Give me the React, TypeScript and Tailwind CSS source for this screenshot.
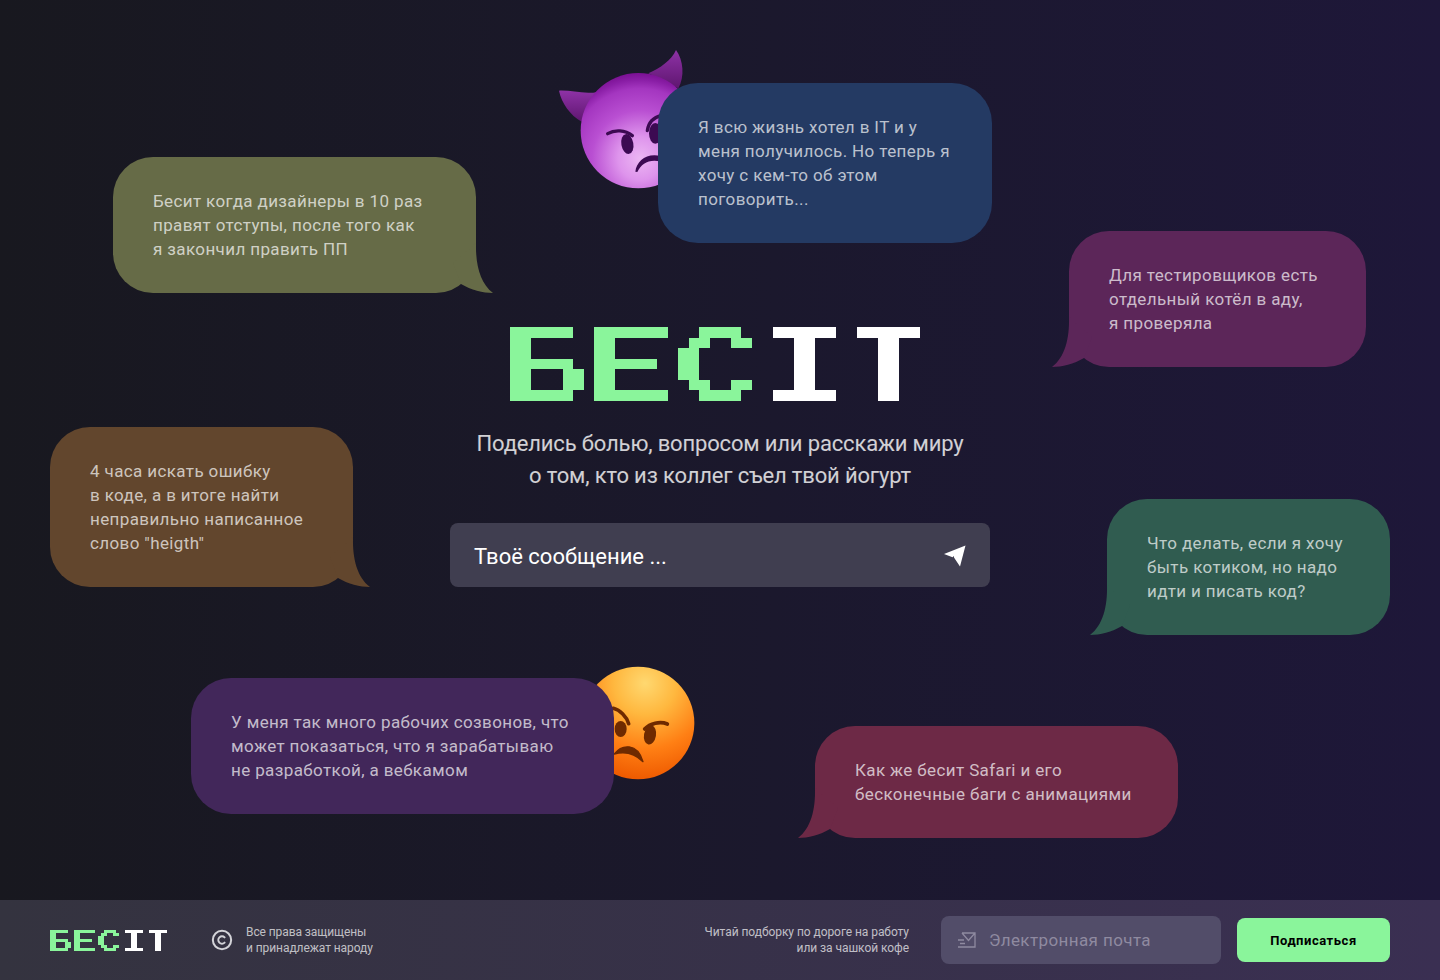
import React from "react";
import { Copyright } from "lucide-react";

const PIXELS: [number, number, number, number, string][] = [
  // Б
  [0, 0, 6, 1, "g"], [0, 1, 2, 6, "g"], [2, 3, 4, 1, "g"], [5, 4, 2, 2, "g"], [2, 6, 4, 1, "g"],
  // Е
  [8, 0, 7, 1, "g"], [8, 1, 2, 6, "g"], [10, 3, 4, 1, "g"], [10, 6, 5, 1, "g"],
  // С
  [18, 0, 4, 1, "g"], [17, 1, 2, 1, "g"], [21, 1, 2, 1, "g"], [16, 2, 2, 3, "g"], [17, 5, 2, 1, "g"], [21, 5, 2, 1, "g"], [18, 6, 4, 1, "g"],
  // I
  [25, 0, 6, 1, "w"], [27, 1, 2, 5, "w"], [25, 6, 6, 1, "w"],
  // T
  [33, 0, 6, 1, "w"], [35, 1, 2, 6, "w"],
];

function Logo({ className }: { className: string }) {
  return (
    <svg viewBox="0 0 39 7" className={className} shapeRendering="crispEdges" role="img" aria-label="БЕСIT">
      {PIXELS.map(([x, y, w, h, c], i) => (
        <rect key={i} x={x} y={y} width={w} height={h} fill={c === "g" ? "#8af59b" : "#ffffff"} />
      ))}
    </svg>
  );
}

function Tail({ color, side }: { color: string; side: "left" | "right" }) {
  return (
    <svg
      viewBox="0 0 40 50"
      className={
        side === "right"
          ? "absolute bottom-0 right-[-17px] h-[50px] w-[40px]"
          : "absolute bottom-0 left-[-17px] h-[50px] w-[40px] -scale-x-100"
      }
      fill={color}
    >
      <path d="M23,0 C22.5,22 27,40 40,50 C30,50 18,47 8,41 L0,20 Z" />
    </svg>
  );
}

function Bubble({
  className,
  color,
  tail,
  children,
}: {
  className: string;
  color: string;
  tail?: "left" | "right";
  children: React.ReactNode;
}) {
  return (
    <div
      className={`absolute rounded-[40px] px-10 py-8 text-[17px] leading-6 tracking-[0.38px] text-white/70 whitespace-nowrap ${className}`}
      style={{ backgroundColor: color }}
    >
      {children}
      {tail && <Tail color={color} side={tail} />}
    </div>
  );
}

function DevilEmoji() {
  return (
    <svg viewBox="0 0 480 480" className="absolute left-[540px] top-[40px] h-[160px] w-[160px]">
      <defs>
        <radialGradient id="devilFace" gradientUnits="userSpaceOnUse" cx="300" cy="355" r="262">
          <stop offset="0" stopColor="#ecb6f3" />
          <stop offset="0.25" stopColor="#de94ec" />
          <stop offset="0.55" stopColor="#b94fd2" />
          <stop offset="0.8" stopColor="#a436c0" />
          <stop offset="0.9" stopColor="#8a1ea6" />
          <stop offset="1" stopColor="#760c8e" />
        </radialGradient>
        <linearGradient id="devilHorn" x1="0" y1="0" x2="0" y2="1">
          <stop offset="0" stopColor="#8e32a6" />
          <stop offset="1" stopColor="#5f1670" />
        </linearGradient>
      </defs>
      <path d="M57,152 C95,150 135,165 175,155 L125,245 C90,225 65,190 57,152Z" fill="url(#devilHorn)" />
      <path d="M408,30 C395,60 360,85 325,100 L415,145 C435,110 430,60 408,30Z" fill="url(#devilHorn)" />
      <circle cx="295" cy="272" r="173" fill="url(#devilFace)" />
      <g fill="none" stroke="#3c0a52" strokeWidth="10" strokeLinecap="round">
        <path d="M203,281 C225,268 255,270 277,287" />
        <path d="M322,272 C325,248 340,232 365,226" />
      </g>
      <ellipse cx="262" cy="312" rx="18" ry="30" fill="#3c0a52" transform="rotate(-10 262 312)" />
      <ellipse cx="346" cy="280" rx="19" ry="31" fill="#3c0a52" />
      <path d="M286,395 C290,362 320,338 362,348 L360,364 C325,358 305,370 292,396Z" fill="#3c0a52" />
    </svg>
  );
}

function AngryEmoji() {
  return (
    <svg viewBox="0 0 390 405" className="absolute left-[580px] top-[655px] h-[135px] w-[130px]">
      <defs>
        <radialGradient id="angryFace" gradientUnits="userSpaceOnUse" cx="195" cy="85" r="290">
          <stop offset="0" stopColor="#ffd870" />
          <stop offset="0.32" stopColor="#ffb83f" />
          <stop offset="0.68" stopColor="#ff7f14" />
          <stop offset="1" stopColor="#ee5a00" />
        </radialGradient>
      </defs>
      <circle cx="174" cy="204" r="169" fill="url(#angryFace)" />
      <g fill="none" stroke="#6e2a00" strokeWidth="11" strokeLinecap="round">
        <path d="M194,222 C210,205 240,198 262,207" />
        <path d="M100,160 C120,165 140,185 146,206" />
      </g>
      <ellipse cx="210" cy="240" rx="18" ry="29" fill="#6e2a00" transform="rotate(10 210 240)" />
      <ellipse cx="122" cy="222" rx="18" ry="24" fill="#6e2a00" />
      <path d="M103,297 C125,268 172,262 189,320 C165,296 135,288 103,297Z" fill="#6e2a00" stroke="#6e2a00" strokeWidth="4" strokeLinejoin="round" />
    </svg>
  );
}

export default function App() {
  return (
    <div
      className="relative flex h-[980px] w-full flex-col overflow-hidden bg-gradient-to-r from-[#18181f] to-[#1e1739] text-white"
      style={{ fontFamily: "Roboto, 'Noto Sans', sans-serif" }}
    >
      <DevilEmoji />
      <AngryEmoji />

      <Bubble className="left-[113px] top-[157px] h-[136px] w-[363px]" color="#666b47" tail="right">
        Бесит когда дизайнеры в 10 раз
        <br />
        правят отступы, после того как
        <br />я закончил править ПП
      </Bubble>
      <Bubble className="left-[658px] top-[83px] h-[160px] w-[334px]" color="#243a63">
        Я всю жизнь хотел в IT и у
        <br />
        меня получилось. Но теперь я
        <br />
        хочу с кем-то об этом
        <br />
        поговорить...
      </Bubble>
      <Bubble className="left-[1069px] top-[231px] h-[136px] w-[297px]" color="#5c2659" tail="left">
        Для тестировщиков есть
        <br />
        отдельный котёл в аду,
        <br />я проверяла
      </Bubble>
      <Bubble className="left-[50px] top-[427px] h-[160px] w-[303px]" color="#62462d" tail="right">
        4 часа искать ошибку
        <br />в коде, а в итоге найти
        <br />
        неправильно написанное
        <br />
        слово "heigth"
      </Bubble>
      <Bubble className="left-[1107px] top-[499px] h-[136px] w-[283px]" color="#305c50" tail="left">
        Что делать, если я хочу
        <br />
        быть котиком, но надо
        <br />
        идти и писать код?
      </Bubble>
      <Bubble className="left-[191px] top-[678px] h-[136px] w-[423px]" color="#42275a">
        У меня так много рабочих созвонов, что
        <br />
        может показаться, что я зарабатываю
        <br />
        не разработкой, а вебкамом
      </Bubble>
      <Bubble className="left-[815px] top-[726px] h-[112px] w-[363px]" color="#6d2946" tail="left">
        Как же бесит Safari и его
        <br />
        бесконечные баги с анимациями
      </Bubble>

      <main className="flex flex-1 flex-col items-center pt-[327px]">
        <Logo className="mr-[10px] h-[73.5px] w-[409.5px]" />
        <p className="mt-[27px] text-center text-[22px] leading-8 tracking-[-0.16px] text-white/80">
          Поделись болью, вопросом или расскажи миру
          <br />о том, кто из коллег съел твой йогурт
        </p>
        <div className="mt-[31px] flex h-16 w-[540px] items-center justify-between rounded-lg bg-[#403e50] pl-6 pr-[24px]">
          <span className="pt-[4px] text-[22px] text-white">Твоё сообщение ...</span>
          <svg viewBox="0 0 22 22" className="mt-[2px] h-[22px] w-[22px]" fill="#ffffff">
            <path d="M21.5,0.5 L0,9 L8.5,12.2 L10,11 L10,12.5 L16,21.5 Z" />
          </svg>
        </div>
      </main>

      <footer className="flex h-20 items-center justify-between bg-gradient-to-r from-[#34333f] to-[#3a2f52] pl-[50px] pr-[50px]">
        <div className="flex items-center">
          <Logo className="h-[21px] w-[117px]" />
          <Copyright className="ml-[44px] h-[22px] w-[22px] text-[#d3d3d8]" strokeWidth={2.2} />
          <p className="ml-[13px] text-[12px] leading-4 tracking-[-0.08px] text-white/70">
            Все права защищены
            <br />и принадлежат народу
          </p>
        </div>
        <div className="flex items-center">
          <p className="text-right text-[12px] leading-4 tracking-[-0.06px] text-white/70">
            Читай подборку по дороге на работу
            <br />
            или за чашкой кофе
          </p>
          <div className="ml-8 flex h-12 w-[280px] items-center rounded-lg bg-[#524d69] pl-4">
            <svg viewBox="0 0 19 16" className="h-4 w-[19px]" fill="none" stroke="#8f8aa0" strokeWidth="1.3">
              <path d="M5,1 H18 V15 H1 M5,1 L11.5,8.5 L18,1 M1,8 H7 M3,11.5 H8" />
            </svg>
            <span className="ml-[13px] pt-[2px] text-[17px] tracking-[0.4px] text-[#8f8aa0]">Электронная почта</span>
          </div>
          <button className="ml-4 h-11 w-[153px] rounded-lg bg-[#8af59b] pt-[1px] text-[13px] font-bold tracking-[0.55px] text-black">
            Подписаться
          </button>
        </div>
      </footer>
    </div>
  );
}
